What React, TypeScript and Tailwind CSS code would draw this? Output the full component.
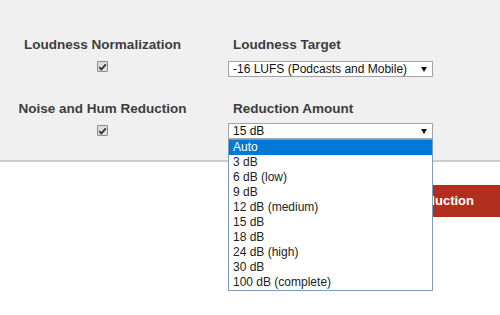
const reductionOptions = [
  "Auto",
  "3 dB",
  "6 dB (low)",
  "9 dB",
  "12 dB (medium)",
  "15 dB",
  "18 dB",
  "24 dB (high)",
  "30 dB",
  "100 dB (complete)",
]

function Checkbox() {
  return (
    <span className="mt-[8px] flex h-[11px] w-[11px] items-center justify-center rounded-[1px] border border-[#8e8e8e] bg-[#dedede]">
      <svg width="9" height="8" viewBox="0 0 9 8">
        <path d="M1.2 4.2 L3.4 6.4 L7.8 1.4" fill="none" stroke="#333" strokeWidth="1.8" />
      </svg>
    </span>
  )
}

function FakeSelect({ value, className = "" }: { value: string; className?: string }) {
  return (
    <div
      className={`flex h-[16px] w-[205px] items-center justify-between border border-[#a3a3a3] bg-white pl-[4px] pr-[5px] text-[12px] leading-[14px] whitespace-nowrap text-[#111] ${className}`}
    >
      <span>{value}</span>
      <svg width="6" height="5" viewBox="0 0 6 5">
        <path d="M0 0 H6 L3 5 Z" fill="#111" />
      </svg>
    </div>
  )
}

export default function App() {
  return (
    <div
      className="relative h-[315px] w-[500px] overflow-hidden bg-white"
      style={{ fontFamily: '"Liberation Sans", Arial, sans-serif' }}
    >
      <div className="h-[162px] border-b-2 border-[#cdcdcd] bg-[#f0f0f0] pt-[37px]">
        <div className="flex">
          <div className="flex w-[205px] flex-col items-center">
            <div className="text-[13.5px] font-bold leading-[16px] text-[#3d3d3d]">Loudness Normalization</div>
            <Checkbox />
          </div>
          <div className="pl-[23px]">
            <div className="pl-[5px] text-[13.5px] font-bold leading-[16px] text-[#3d3d3d]">Loudness Target</div>
            <FakeSelect value="-16 LUFS (Podcasts and Mobile)" className="mt-[8px]" />
          </div>
        </div>

        <div className="mt-[24px] flex">
          <div className="flex w-[205px] flex-col items-center">
            <div className="text-[13.5px] font-bold leading-[16px] text-[#3d3d3d]">Noise and Hum Reduction</div>
            <Checkbox />
          </div>
          <div className="relative pl-[23px]">
            <div className="pl-[5px] text-[13.5px] font-bold leading-[16px] text-[#3d3d3d]">Reduction Amount</div>
            <FakeSelect value="15 dB" className="mt-[6px]" />
          </div>
        </div>
      </div>

      <div className="mt-[23px] flex">
        <button className="ml-[330px] h-[32px] w-[175px] bg-[#b22e1f] pr-[26px] text-right text-[13px] font-bold text-white">
          Apply Noise Reduction
        </button>
      </div>

      <ul className="absolute left-[228px] top-[139px] w-[205px] border border-[#7f9db9] bg-white text-[12px] leading-[15px] text-[#222]">
        {reductionOptions.map((opt, i) => (
          <li key={opt} className={i === 0 ? "bg-[#0078d7] pl-[4px] text-white" : "pl-[4px]"}>
            {opt}
          </li>
        ))}
      </ul>
    </div>
  )
}
